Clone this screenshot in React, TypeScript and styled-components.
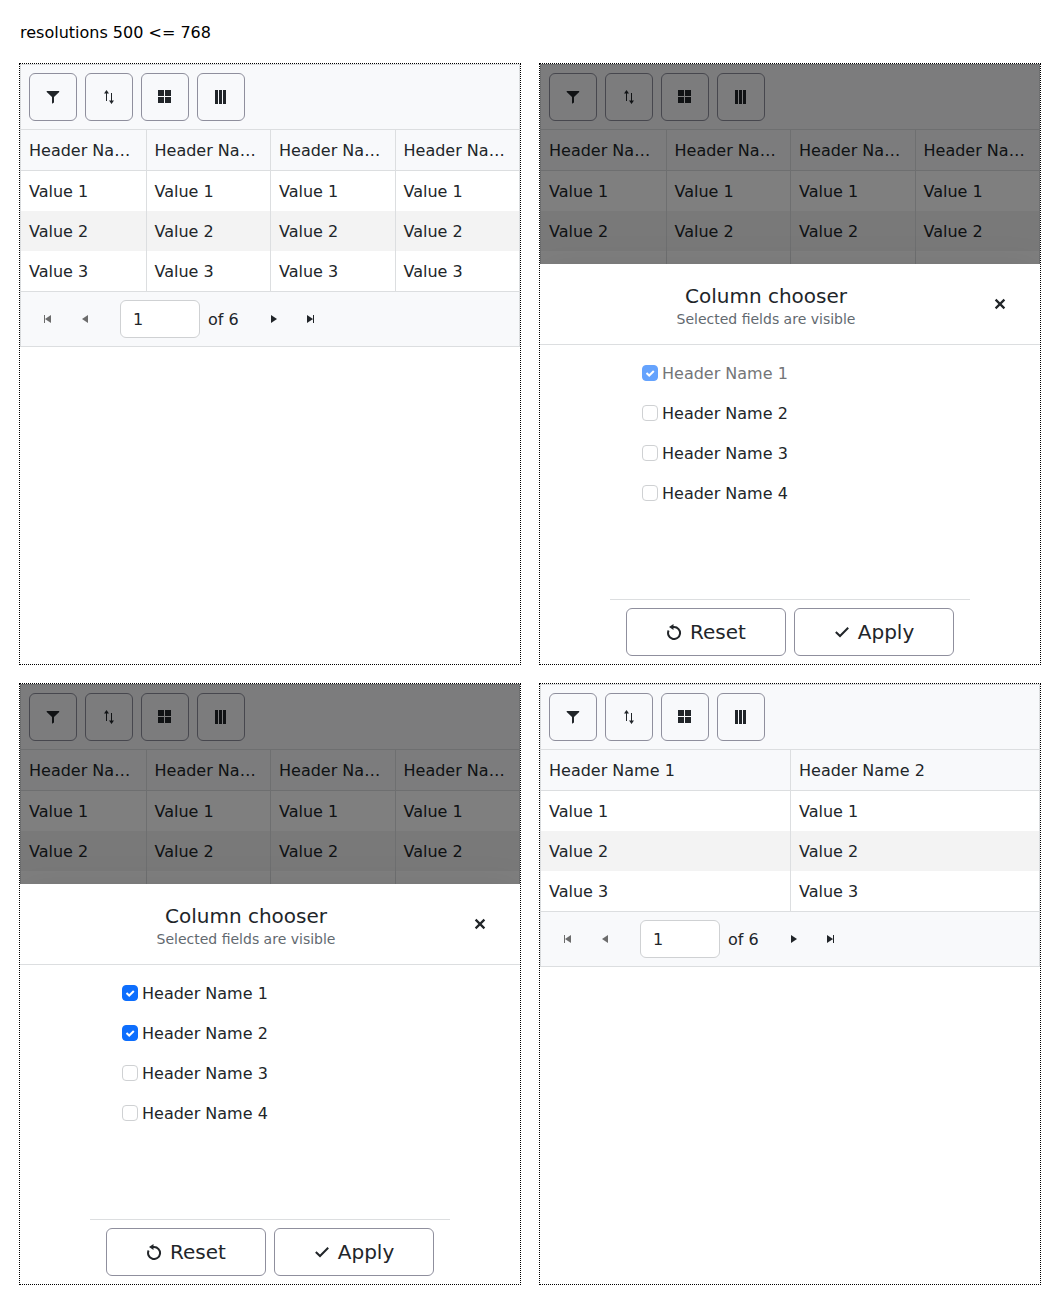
import React, { useId, useState } from 'react';
import styled, { createGlobalStyle } from 'styled-components';

const GlobalStyle = createGlobalStyle`
  *, *::before, *::after { box-sizing: border-box; }
  body {
    margin: 0;
    background: #fff;
    color: #000;
    font: 16px/25px "DejaVu Sans", sans-serif;
  }
`;

const ink = '#212529';
const line = '#dcdee0';
const fieldLine = '#cfd1d3';
const surface = '#f8f9fb';
const outlineColor = '#8f8f9d';

const Page = styled.main`
  padding: 20px;
`;

const PageTitle = styled.p`
  margin: 0 0 19px;
`;

const Frames = styled.div`
  display: grid;
  grid-template-columns: repeat(2, minmax(0, 1fr));
  gap: 20px;
`;

const Frame = styled.section`
  position: relative;
  min-height: 600px;
  outline: 1px dotted #000;
  color: ${ink};
  background: #fff;
  overflow: hidden;
`;

const GridBox = styled.div`
  border: 1px solid ${line};
  background: ${surface};
`;

const Toolbar = styled.div`
  display: flex;
  gap: 8px;
  padding: 8px;
`;

const OutlineButton = styled.button<{ $wide?: boolean }>`
  display: flex;
  align-items: center;
  justify-content: center;
  gap: 8px;
  width: ${(p) => (p.$wide ? '160px' : '48px')};
  height: 48px;
  padding: 0;
  border: 1px solid ${outlineColor};
  border-radius: 6px;
  background: transparent;
  color: inherit;
  font: inherit;
  font-size: 20px;
  line-height: 24px;
`;

const Table = styled.table`
  width: 100%;
  table-layout: fixed;
  border-collapse: separate;
  border-spacing: 0;
  background: #fff;
  tbody tr:nth-child(even) { background: #f3f3f3; }
`;

const Cell = styled.td`
  height: 40px;
  padding: 8px 8px 7px;
  text-align: left;
  font-weight: 400;
  white-space: nowrap;
  overflow: hidden;
  text-overflow: ellipsis;
  & + & { border-left: 1px solid ${line}; }
`;

const HeadCell = styled(Cell)`
  height: 42px;
  background: ${surface};
  border-top: 1px solid ${line};
  border-bottom: 1px solid ${line};
`;

const Pager = styled.nav`
  display: flex;
  align-items: center;
  gap: 16px;
  padding: 8px;
  border-top: 1px solid ${line};
`;

const PagerGroup = styled.div`
  display: flex;
`;

const PagerButton = styled.button`
  display: flex;
  align-items: center;
  justify-content: center;
  width: 38px;
  height: 38px;
  padding: 0;
  border: 0;
  background: transparent;
  color: inherit;
  & + & { margin-left: -1px; }
  &:disabled { color: #6c6c6c; }
`;

const PageField = styled.label`
  display: flex;
  align-items: center;
  gap: 8px;
`;

const PageInput = styled.input`
  width: 80px;
  height: 38px;
  padding: 6px 12px;
  border: 1px solid ${fieldLine};
  border-radius: 6px;
  background: #fff;
  color: inherit;
  font: inherit;
  line-height: 24px;
`;

const Backdrop = styled.div`
  position: absolute;
  inset: 0;
  display: flex;
  align-items: flex-end;
  background: rgba(0, 0, 0, 0.5);
`;

const Sheet = styled.div`
  display: flex;
  flex-direction: column;
  width: 100%;
  height: 400px;
  background: #fff;
  box-shadow: 0 0 32px rgba(0, 0, 0, 0.08);
`;

const SheetHeader = styled.header`
  display: flex;
  padding: 16px;
  border-bottom: 1px solid ${line};
`;

const SheetHeading = styled.div`
  flex: 1;
  text-align: center;
`;

const SheetTitle = styled.h2`
  margin: 0;
  font-size: 20px;
  font-weight: 400;
  line-height: 32px;
`;

const SheetSubtitle = styled.p`
  margin: 0;
  color: #62696f;
  font-size: 14px;
  line-height: 14px;
`;

const CloseButton = styled.button`
  display: flex;
  align-items: center;
  justify-content: center;
  width: 48px;
  height: 48px;
  padding: 0;
  border: 0;
  background: transparent;
  color: inherit;
`;

const SheetColumn = styled.div`
  width: 100%;
  max-width: 360px;
  margin: 0 auto;
`;

const Choices = styled(SheetColumn)`
  flex: 1;
  padding: 8px 32px;
`;

const Choice = styled.div`
  display: flex;
  align-items: center;
  gap: 4px;
  height: 40px;
`;

const CheckWrap = styled.span`
  display: grid;
  > * { grid-area: 1 / 1; }
  svg {
    z-index: 1;
    pointer-events: none;
  }
`;

const Check = styled.input`
  appearance: none;
  width: 16px;
  height: 16px;
  margin: 0;
  border: 1px solid ${fieldLine};
  border-radius: 4px;
  background: #fff;
  &:checked {
    border-color: #0d6efd;
    background: #0d6efd;
  }
  &:disabled { opacity: 0.63; }
  &:not(:checked) + svg { display: none; }
`;

const ChoiceLabel = styled.label<{ $muted?: boolean }>`
  color: ${(p) => (p.$muted ? '#737577' : 'inherit')};
`;

const SheetFooter = styled(SheetColumn)`
  display: flex;
  justify-content: center;
  gap: 8px;
  padding: 8px 0;
  border-top: 1px solid ${line};
`;

const Icon = ({ size = 16, children }: { size?: number; children: React.ReactNode }) => (
  <svg width={size} height={size} viewBox={`0 0 ${size} ${size}`} fill="currentColor" aria-hidden="true">
    {children}
  </svg>
);

const FilterIcon = () => (
  <Icon><path d="M1.7 2H14.2V3L9 8V13.6L7 14.8V8L1.7 3Z" /></Icon>
);
const SortIcon = () => (
  <Icon>
    <path d="M5.5 1L8 4.5H6V12H5V4.5H3Z" />
    <path d="M10 4H11V11.5H13L10.5 15L8 11.5H10Z" />
  </Icon>
);
const GroupIcon = () => (
  <Icon><path d="M1 1H7V7H1ZM8 1H14V7H8ZM1 8H7V14H1ZM8 8H14V14H8Z" /></Icon>
);
const ColumnsIcon = () => (
  <Icon><path d="M2 1H5V15H2ZM6 1H9V15H6ZM10 1H13V15H10Z" /></Icon>
);
const FirstIcon = () => (
  <Icon size={12}><path d="M2 2H3V10H2ZM9 2V10L3 6Z" /></Icon>
);
const PrevIcon = () => (
  <Icon size={12}><path d="M9 2V10L3 6Z" /></Icon>
);
const NextIcon = () => (
  <Icon size={12}><path d="M3 2V10L9 6Z" /></Icon>
);
const LastIcon = () => (
  <Icon size={12}><path d="M2 2V10L8 6ZM8 2H9V10H8Z" /></Icon>
);
const CloseIcon = () => (
  <Icon><path d="M3.6 3.6L12.4 12.4M12.4 3.6L3.6 12.4" fill="none" stroke="currentColor" strokeWidth="2.2" /></Icon>
);
const ResetIcon = () => (
  <Icon>
    <path d="M2.6 6.5A6 6 0 1 0 8 3H6.5" fill="none" stroke="currentColor" strokeWidth="2" />
    <path d="M7.5 0V6L3 3Z" />
  </Icon>
);
const ApplyIcon = () => (
  <Icon><path d="M1.8 8L6 12L14.2 3.8" fill="none" stroke="currentColor" strokeWidth="2" /></Icon>
);
const TickIcon = () => (
  <Icon><path d="M4.5 8L7.2 10.5L11.8 6" fill="none" stroke="#fff" strokeWidth="2" /></Icon>
);

const tools = [
  { label: 'Filter', Glyph: FilterIcon },
  { label: 'Sort', Glyph: SortIcon },
  { label: 'Group', Glyph: GroupIcon },
  { label: 'Columns', Glyph: ColumnsIcon },
];
const fields = ['Header Name 1', 'Header Name 2', 'Header Name 3', 'Header Name 4'];
const values = ['Value 1', 'Value 2', 'Value 3'];

function DataGrid({ columns }: { columns: string[] }) {
  const pageId = useId();
  return (
    <GridBox>
      <Toolbar>
        {tools.map(({ label, Glyph }) => (
          <OutlineButton key={label} type="button" aria-label={label}><Glyph /></OutlineButton>
        ))}
      </Toolbar>
      <Table>
        <thead>
          <tr>
            {columns.map((name) => <HeadCell as="th" scope="col" key={name}>{name}</HeadCell>)}
          </tr>
        </thead>
        <tbody>
          {values.map((value) => (
            <tr key={value}>
              {columns.map((name) => <Cell key={name}>{value}</Cell>)}
            </tr>
          ))}
        </tbody>
      </Table>
      <Pager aria-label="Pages">
        <PagerGroup>
          <PagerButton type="button" aria-label="First page" disabled><FirstIcon /></PagerButton>
          <PagerButton type="button" aria-label="Previous page" disabled><PrevIcon /></PagerButton>
        </PagerGroup>
        <PageField htmlFor={pageId}>
          <PageInput id={pageId} type="text" inputMode="numeric" defaultValue="1" />
          of 6
        </PageField>
        <PagerGroup>
          <PagerButton type="button" aria-label="Next page"><NextIcon /></PagerButton>
          <PagerButton type="button" aria-label="Last page"><LastIcon /></PagerButton>
        </PagerGroup>
      </Pager>
    </GridBox>
  );
}

function ColumnChooser({ initial }: { initial: string[] }) {
  const id = useId();
  const [selected, setSelected] = useState(initial);
  const toggle = (name: string) =>
    setSelected((s) => (s.includes(name) ? s.filter((n) => n !== name) : [...s, name]));

  return (
    <Backdrop>
      <Sheet role="dialog" aria-labelledby={`${id}-title`}>
        <SheetHeader>
          <SheetHeading>
            <SheetTitle id={`${id}-title`}>Column chooser</SheetTitle>
            <SheetSubtitle>Selected fields are visible</SheetSubtitle>
          </SheetHeading>
          <CloseButton type="button" aria-label="Close"><CloseIcon /></CloseButton>
        </SheetHeader>
        <Choices>
          {fields.map((name) => {
            const checked = selected.includes(name);
            // The last visible column cannot be hidden.
            const locked = checked && selected.length === 1;
            return (
              <Choice key={name}>
                <CheckWrap>
                  <Check
                    id={`${id}-${name}`}
                    type="checkbox"
                    checked={checked}
                    disabled={locked}
                    onChange={() => toggle(name)}
                  />
                  <TickIcon />
                </CheckWrap>
                <ChoiceLabel htmlFor={`${id}-${name}`} $muted={locked}>{name}</ChoiceLabel>
              </Choice>
            );
          })}
        </Choices>
        <SheetFooter>
          <OutlineButton type="button" $wide onClick={() => setSelected(initial)}>
            <ResetIcon />Reset
          </OutlineButton>
          <OutlineButton type="button" $wide><ApplyIcon />Apply</OutlineButton>
        </SheetFooter>
      </Sheet>
    </Backdrop>
  );
}

export default function App() {
  return (
    <Page>
      <GlobalStyle />
      <PageTitle>resolutions 500 &lt;= 768</PageTitle>
      <Frames>
        <Frame><DataGrid columns={fields} /></Frame>
        <Frame>
          <DataGrid columns={fields} />
          <ColumnChooser initial={fields.slice(0, 1)} />
        </Frame>
        <Frame>
          <DataGrid columns={fields} />
          <ColumnChooser initial={fields.slice(0, 2)} />
        </Frame>
        <Frame><DataGrid columns={fields.slice(0, 2)} /></Frame>
      </Frames>
    </Page>
  );
}
